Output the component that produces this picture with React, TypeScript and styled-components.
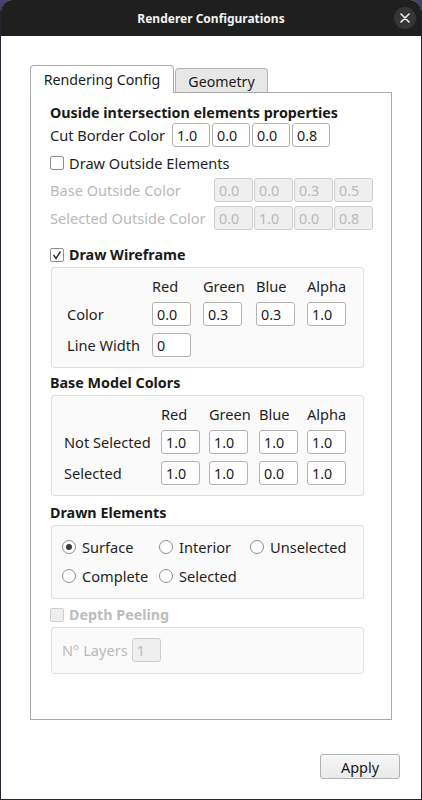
import React from 'react'
import styled, { createGlobalStyle } from 'styled-components'

const GlobalStyle = createGlobalStyle`
  html, body {
    margin: 0;
    padding: 0;
    background: #45416e;
  }
  body {
    font-family: 'Noto Sans', 'DejaVu Sans', sans-serif;
    color: #1f1f1f;
  }
`

const Window = styled.div`
  width: 422px;
  height: 800px;
  box-sizing: border-box;
  display: flex;
  flex-direction: column;
  background: #ffffff;
  border: 1px solid #262630;
  border-top: none;
  border-radius: 12px 12px 0 0;
  overflow: hidden;
`

const TitleBar = styled.div`
  height: 36px;
  flex: none;
  background: #1f1f1f;
  display: grid;
  grid-template-columns: 1fr auto 1fr;
  align-items: center;
`

const Title = styled.div`
  grid-column: 2;
  color: #f2f2f2;
  font-size: 12px;
  font-weight: 700;
`

const CloseButton = styled.div`
  grid-column: 3;
  justify-self: end;
  margin-right: 5px;
  width: 22px;
  height: 22px;
  border-radius: 50%;
  background: #363636;
  display: flex;
  align-items: center;
  justify-content: center;
`

const Body = styled.div`
  padding: 29px 30px 0 29px;
  display: flex;
  flex-direction: column;
`

const TabBar = styled.div`
  display: flex;
  align-items: flex-end;
  height: 28px;
  margin-bottom: -1px;
  position: relative;
  z-index: 1;
`

const Tab = styled.div<{ $active?: boolean }>`
  box-sizing: border-box;
  width: ${p => p.$active ? '144px' : '93px'};
  height: ${p => p.$active ? '28px' : '25px'};
  margin-left: ${p => p.$active ? '0' : '1px'};
  border: 1px solid ${p => p.$active ? '#ababab' : '#b4b4b4'};
  border-bottom: ${p => p.$active ? 'none' : '1px solid #a9a9a9'};
  border-radius: 4px 4px 0 0;
  background: ${p => p.$active ? '#ffffff' : '#e7e7e7'};
  font-size: 14.2px;
  display: flex;
  align-items: center;
  justify-content: center;
  padding-top: ${p => p.$active ? '0' : '1px'};
  color: #1a1a1a;
`

const Pane = styled.div`
  box-sizing: border-box;
  width: 362px;
  height: 628px;
  border: 1px solid #a9a9a9;
  padding: 10px 0 0 19px;
  display: flex;
  flex-direction: column;
  align-items: flex-start;
`

const SectionTitle = styled.div<{ $mt?: number; $disabled?: boolean }>`
  margin-top: ${p => p.$mt || 0}px;
  height: 20px;
  line-height: 20px;
  font-size: 14.3px;
  font-weight: 700;
  color: ${p => p.$disabled ? '#bdbdbd' : '#1a1a1a'};
  display: flex;
  align-items: center;
  gap: 5px;
  white-space: nowrap;
`

const InlineRow = styled.div<{ $mt?: number }>`
  margin-top: ${p => p.$mt || 0}px;
  height: 24px;
  display: flex;
  align-items: center;
  gap: 2px;
`

const RowLabel = styled.span<{ $w?: number; $disabled?: boolean }>`
  width: ${p => p.$w ? p.$w + 'px' : 'auto'};
  flex: none;
  white-space: nowrap;
  font-size: 14.6px;
  line-height: 20px;
  color: ${p => p.$disabled ? '#b9b9b9' : '#1f1f1f'};
`

const Field = styled.input<{ $w?: number }>`
  box-sizing: border-box;
  width: ${p => p.$w || 39}px;
  height: 24px;
  margin: 0;
  padding: 0 0 0 4px;
  border: 1px solid #b3b3b3;
  border-radius: 3px;
  background: #ffffff;
  font-family: 'Noto Sans', 'DejaVu Sans', sans-serif;
  font-size: 14.3px;
  color: #1a1a1a;
  outline: none;
  &:disabled {
    background: #efefef;
    border-color: #cdcdcd;
    color: #b9b9b9;
  }
`

const DisabledGrid = styled.div`
  margin-top: 3px;
  display: grid;
  grid-template-columns: 163px repeat(4, 39px);
  grid-auto-rows: 24px;
  column-gap: 1px;
  row-gap: 4px;
  align-items: center;
`

const CheckRow = styled.label<{ $mt?: number; $disabled?: boolean }>`
  margin-top: ${p => p.$mt || 0}px;
  height: 24px;
  display: flex;
  align-items: center;
  gap: 5px;
  font-size: 14.6px;
  color: ${p => p.$disabled ? '#b9b9b9' : '#1f1f1f'};
`

const Box = styled.span<{ $disabled?: boolean }>`
  box-sizing: border-box;
  width: 14px;
  height: 14px;
  flex: none;
  border: 1px solid ${p => p.$disabled ? '#d0d0d0' : '#8e8e8e'};
  border-radius: 2px;
  background: ${p => p.$disabled ? '#eeeeee' : '#ffffff'};
  display: flex;
  align-items: center;
  justify-content: center;
`

const Group = styled.div<{ $mt?: number }>`
  box-sizing: border-box;
  margin-top: ${p => p.$mt || 2}px;
  margin-left: 1px;
  width: 313px;
  background: #fafafa;
  border: 1px solid #dfdfdf;
  border-radius: 3px;
`

const ColorGrid = styled.div<{ $cols: string; $pl: number }>`
  display: grid;
  grid-template-columns: ${p => p.$cols};
  grid-template-rows: 17px 24px 24px;
  row-gap: 7px;
  padding: 10px 0 10px ${p => p.$pl}px;
  align-items: center;
`

const HeadCell = styled.span`
  font-size: 14.6px;
  line-height: 17px;
  color: #1f1f1f;
  white-space: nowrap;
`

const RadioGrid = styled.div`
  display: grid;
  grid-template-columns: 97px 91px auto;
  grid-template-rows: 24px 24px;
  row-gap: 5px;
  padding: 9px 0 10px 10px;
  align-items: center;
`

const RadioItem = styled.label`
  display: flex;
  align-items: center;
  gap: 6px;
  font-size: 14.6px;
  line-height: 20px;
  color: #1f1f1f;
  white-space: nowrap;
`

const RadioCircle = styled.span`
  box-sizing: border-box;
  width: 14px;
  height: 14px;
  flex: none;
  border: 1px solid #8e8e8e;
  border-radius: 50%;
  background: #ffffff;
  display: flex;
  align-items: center;
  justify-content: center;
`

const RadioDot = styled.span`
  width: 6px;
  height: 6px;
  border-radius: 50%;
  background: #3a3a3a;
`

const LayersRow = styled.div`
  display: flex;
  align-items: center;
  gap: 4px;
  height: 24px;
  padding: 10px 0 11px 10px;
`

const Footer = styled.div`
  margin-top: 34px;
  padding-right: 21px;
  display: flex;
  justify-content: flex-end;
`

const ApplyButton = styled.button`
  box-sizing: border-box;
  width: 80px;
  height: 25px;
  border: 1px solid #b2b2b2;
  border-radius: 3px;
  background: linear-gradient(#f7f7f7, #e9e9e9);
  font-family: 'Noto Sans', 'DejaVu Sans', sans-serif;
  font-size: 14.5px;
  color: #1a1a1a;
  padding: 0;
`

const Check = ({ checked, disabled }: { checked?: boolean; disabled?: boolean }) => (
  <Box $disabled={disabled}>
    {checked && (
      <svg width="10" height="10" viewBox="0 0 10 10">
        <polyline points="1.5,5 4,8.5 8.5,1.5" fill="none" stroke="#2a2a2a" strokeWidth="1.4" />
      </svg>
    )}
  </Box>
)

const Radio = ({ label, checked }: { label: string; checked?: boolean }) => (
  <RadioItem>
    <RadioCircle>{checked && <RadioDot />}</RadioCircle>
    {label}
  </RadioItem>
)

const heads = ['Red', 'Green', 'Blue', 'Alpha']

const ColorTable = ({ cols, pl, rows }: { cols: string; pl: number; rows: [string, string[]][] }) => (
  <ColorGrid $cols={cols} $pl={pl}>
    <span />
    {heads.map(h => <HeadCell key={h}>{h}</HeadCell>)}
    {rows.map(([label, values]) => (
      <React.Fragment key={label}>
        <RowLabel>{label}</RowLabel>
        {values.map((v, i) => <Field key={i} readOnly value={v} />)}
        {Array.from({ length: 4 - values.length }).map((_, i) => <span key={'e' + i} />)}
      </React.Fragment>
    ))}
  </ColorGrid>
)

export default function App() {
  return (
    <>
      <GlobalStyle />
      <Window>
        <TitleBar>
          <Title>Renderer Configurations</Title>
          <CloseButton>
            <svg width="10" height="10" viewBox="0 0 10 10">
              <path d="M1 1L9 9M9 1L1 9" stroke="#f0f0f0" strokeWidth="1.6" strokeLinecap="round" />
            </svg>
          </CloseButton>
        </TitleBar>
        <Body>
          <TabBar>
            <Tab $active>Rendering Config</Tab>
            <Tab>Geometry</Tab>
          </TabBar>
          <Pane>
            <SectionTitle>Ouside intersection elements properties</SectionTitle>
            <InlineRow>
              <RowLabel $w={120}>Cut Border Color</RowLabel>
              {['1.0', '0.0', '0.0', '0.8'].map((v, i) => <Field key={i} $w={38} readOnly value={v} />)}
            </InlineRow>
            <CheckRow $mt={4}>
              <Check />
              Draw Outside Elements
            </CheckRow>
            <DisabledGrid>
              <RowLabel $disabled>Base Outside Color</RowLabel>
              {['0.0', '0.0', '0.3', '0.5'].map((v, i) => <Field key={i} disabled value={v} readOnly />)}
              <RowLabel $disabled>Selected Outside Color</RowLabel>
              {['0.0', '1.0', '0.0', '0.8'].map((v, i) => <Field key={i} disabled value={v} readOnly />)}
            </DisabledGrid>

            <SectionTitle $mt={15}>
              <Check checked />
              Draw Wireframe
            </SectionTitle>
            <Group>
              <ColorTable
                cols="85px 51px 53px 51px 39px"
                pl={15}
                rows={[['Color', ['0.0', '0.3', '0.3', '1.0']], ['Line Width', ['0']]]}
              />
            </Group>

            <SectionTitle $mt={5}>Base Model Colors</SectionTitle>
            <Group>
              <ColorTable
                cols="97px 48px 50px 48px 39px"
                pl={12}
                rows={[['Not Selected', ['1.0', '1.0', '1.0', '1.0']], ['Selected', ['1.0', '1.0', '0.0', '1.0']]]}
              />
            </Group>

            <SectionTitle $mt={7}>Drawn Elements</SectionTitle>
            <Group>
              <RadioGrid>
                <Radio label="Surface" checked />
                <Radio label="Interior" />
                <Radio label="Unselected" />
                <Radio label="Complete" />
                <Radio label="Selected" />
              </RadioGrid>
            </Group>

            <SectionTitle $mt={6} $disabled>
              <Check disabled />
              Depth Peeling
            </SectionTitle>
            <Group>
              <LayersRow>
                <RowLabel $disabled>N° Layers</RowLabel>
                <Field $w={29} disabled readOnly value="1" />
              </LayersRow>
            </Group>
          </Pane>
        </Body>
        <Footer>
          <ApplyButton>Apply</ApplyButton>
        </Footer>
      </Window>
    </>
  )
}
